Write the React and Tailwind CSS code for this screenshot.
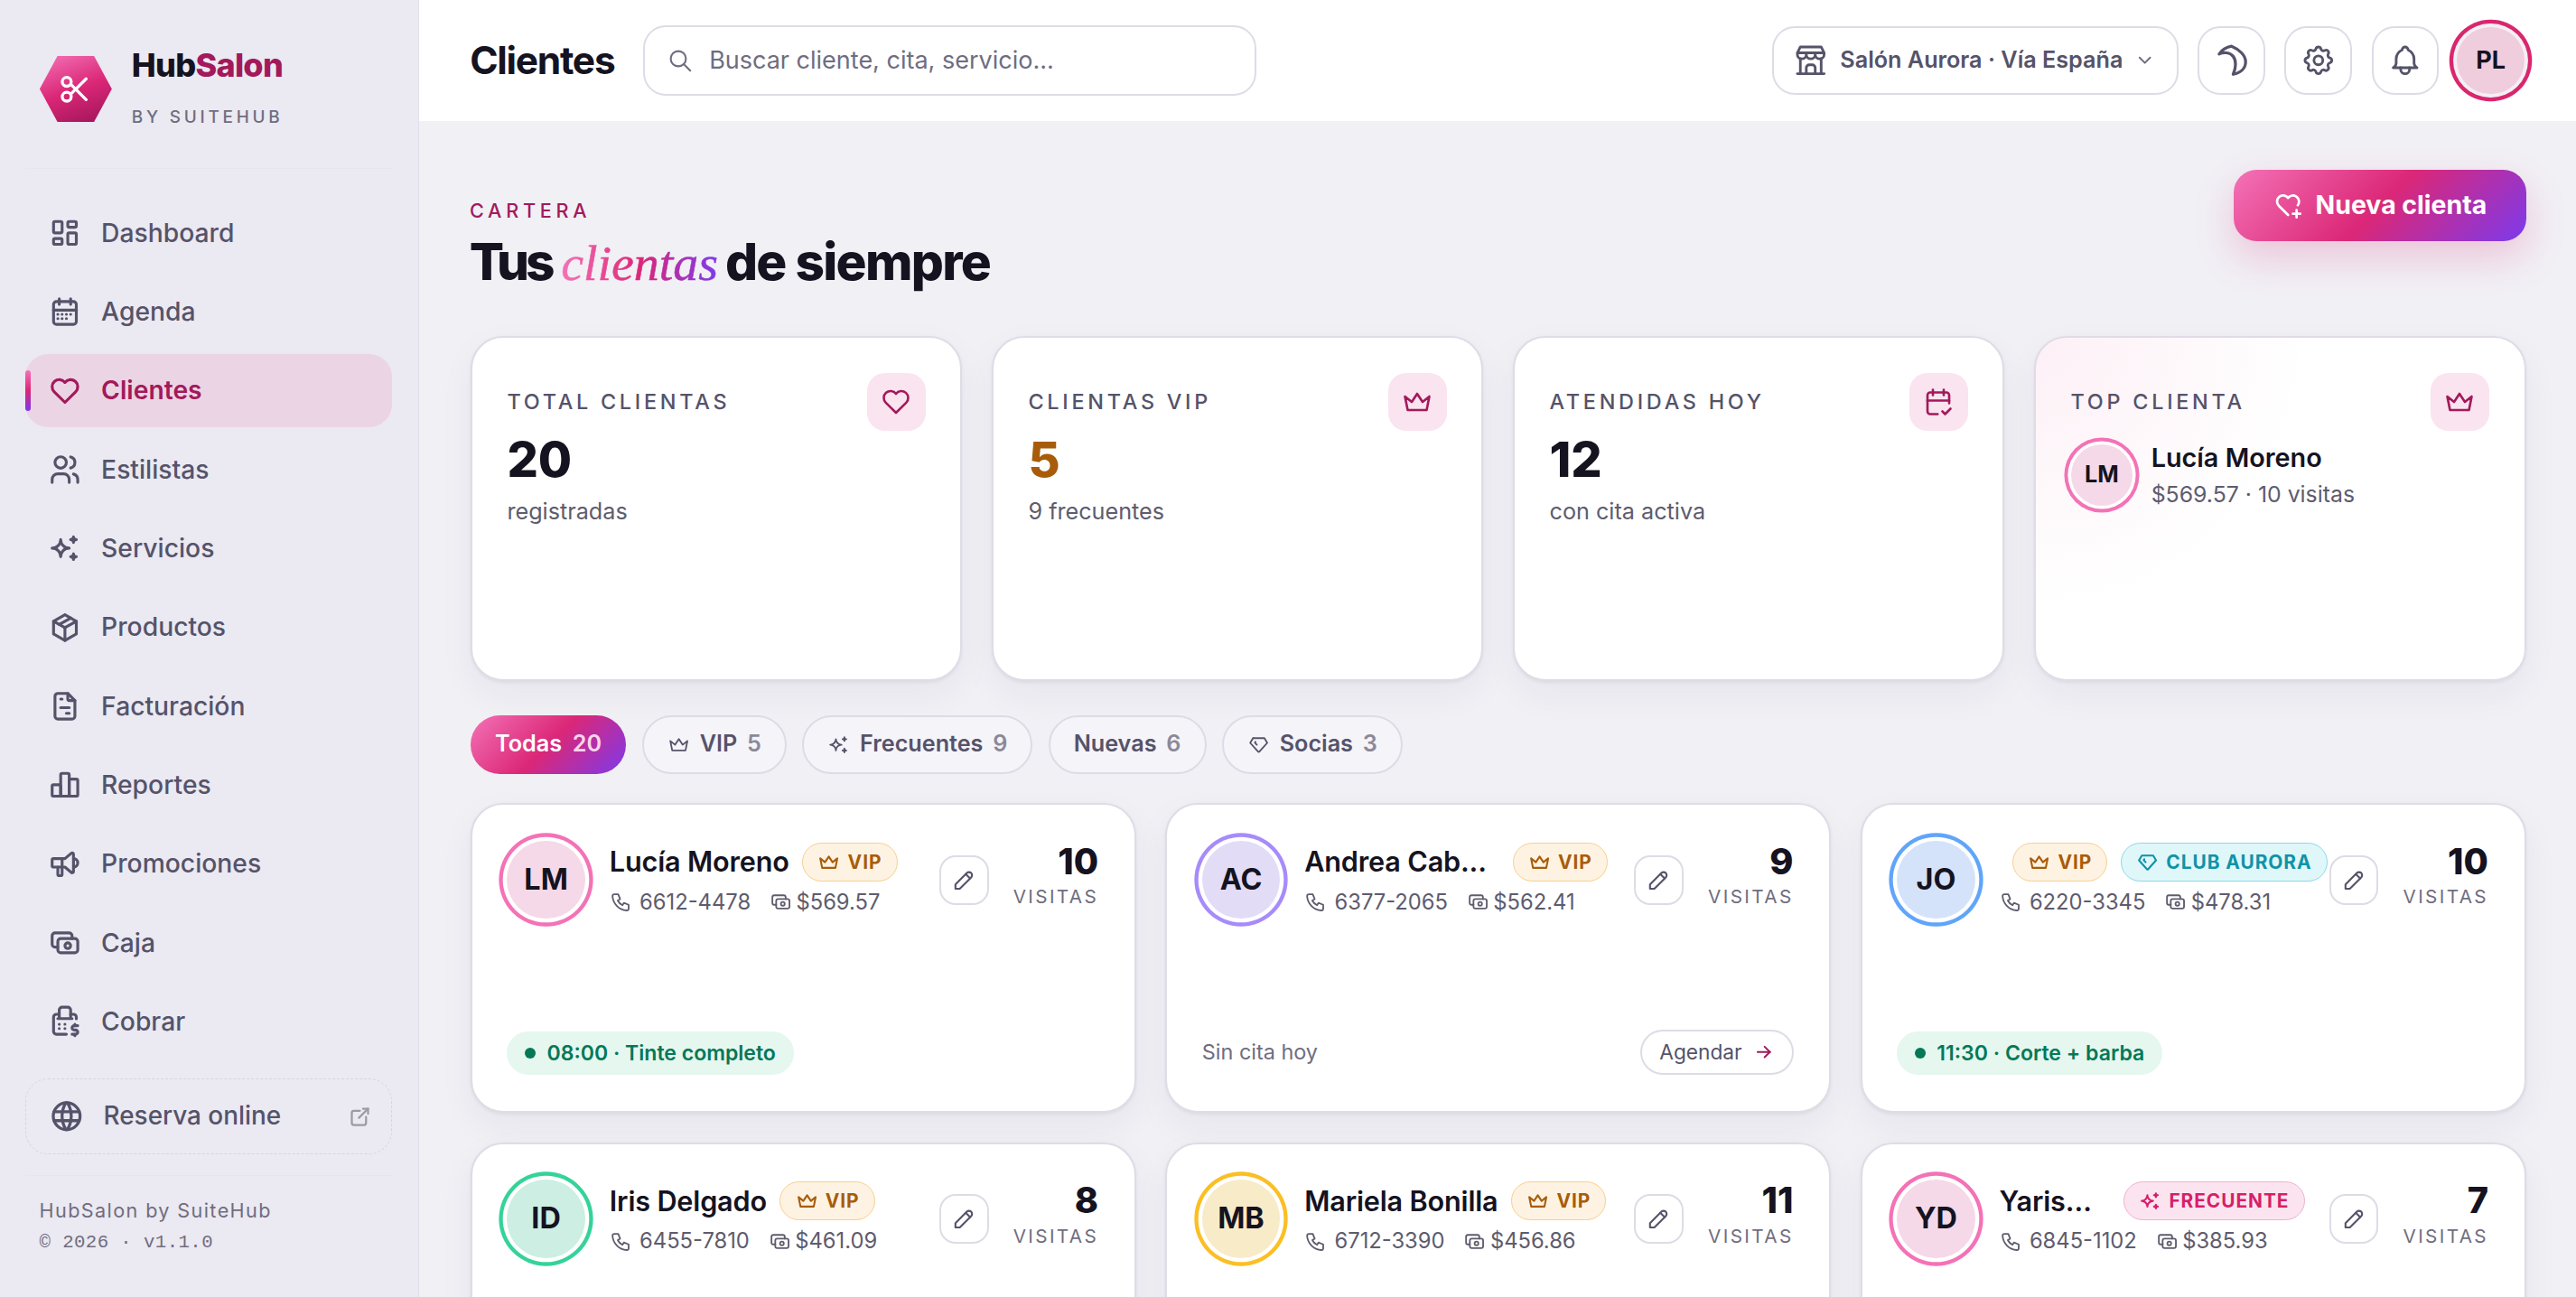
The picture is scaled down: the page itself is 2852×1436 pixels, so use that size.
import React from "react";
import {
  TbLayoutDashboard, TbCalendarMonth, TbHeart, TbUsers, TbSparkles, TbPackage, TbFileInvoice, TbChartBar,
  TbSpeakerphone, TbCash, TbCashRegister, TbWorld, TbExternalLink, TbSearch, TbBuildingStore, TbChevronDown,
  TbSettings, TbBell, TbHeartPlus, TbCrown, TbCalendarCheck, TbPhone, TbPencil, TbArrowRight, TbDiamond, TbScissors,
} from "react-icons/tb";

const NAV = [
  ["Dashboard", TbLayoutDashboard],
  ["Agenda", TbCalendarMonth],
  ["Clientes", TbHeart, true],
  ["Estilistas", TbUsers],
  ["Servicios", TbSparkles],
  ["Productos", TbPackage],
  ["Facturación", TbFileInvoice],
  ["Reportes", TbChartBar],
  ["Promociones", TbSpeakerphone],
  ["Caja", TbCash],
  ["Cobrar", TbCashRegister],
];

const GRAD = "bg-[linear-gradient(135deg,#f472b6_0%,#db2777_50%,#7c3aed_100%)]";
const CARD_SHADOW = "shadow-[0_1px_2px_rgba(40,30,80,0.06),0_8px_22px_rgba(40,30,80,0.05)]";

function Sidebar() {
  return (
    <aside className="w-[257.6px] shrink-0 h-full bg-[#ebe9f1] border-r border-[#e0dfe8] px-[15.7px] flex flex-col">
      <div className="h-[104px] pt-[5px] pl-[8.7px] flex items-center gap-[12.2px] border-b border-[#e6e5ed]">
        <div className="mt-[1px] w-[44.4px] h-[41px] flex items-center justify-center text-white bg-[linear-gradient(160deg,#f472b6_0%,#db2777_50%,#9d1458_100%)] [clip-path:polygon(25%_0,75%_0,100%_50%,75%_100%,25%_100%,0_50%)]">
          <TbScissors size={22} strokeWidth={2} />
        </div>
        <div className="flex flex-col">
          <div className="text-[20px] leading-[20px] font-extrabold tracking-[-0.02em] text-[#15131f]">
            Hub<span className="text-[#a3195b]">Salon</span>
          </div>
          <div className="mt-[16.3px] text-[10.5px] leading-[12px] font-medium tracking-[0.2em] text-[#6f6d80]">BY SUITEHUB</div>
        </div>
      </div>
      <nav className="mt-[16.8px] flex flex-col gap-[3.52px]">
        {NAV.map(([label, Icon, active]) => (
          <div
            key={label}
            className={
              "relative h-[45px] rounded-[14px] px-[14px] flex items-center gap-[11.6px] text-[15.7px] " +
              (active ? "bg-[#ebd5e4] text-[#a3195b] font-semibold" : "text-[#55536a] font-medium")
            }
          >
            {active && (
              <span className="absolute left-0 top-[10px] h-[25px] w-[3.4px] rounded-full bg-[linear-gradient(180deg,#f472b6,#db2777_50%,#7c3aed)]" />
            )}
            <Icon size={21} strokeWidth={2} className="shrink-0" />
            <span>{label}</span>
          </div>
        ))}
      </nav>
      <div className="mt-[12.5px] h-[46.5px] rounded-[14px] border border-dashed border-[#d6d5df] pl-[14px] pr-[12px] flex items-center gap-[11.4px] text-[#55536a] text-[15.5px] font-medium">
        <TbWorld size={22} strokeWidth={2} className="shrink-0" />
        <span className="flex-1">Reserva online</span>
        <TbExternalLink size={15} className="text-[#9b9aa5]" />
      </div>
      <div className="mt-[13px] border-t border-[#e6e5ed] pt-[11px] pl-[8.5px] text-[#6f6d80] text-[12px] leading-[20px]">
        <div className="tracking-[0.065em]">HubSalon by SuiteHub</div>
        <div className="font-['Liberation_Mono',monospace] text-[11.5px] tracking-[0.02em]">© 2026 · v1.1.0</div>
      </div>
    </aside>
  );
}

function IconBtn({ children }) {
  return (
    <button className="w-[41.4px] h-[42px] rounded-[14px] border-[1.5px] border-[#dddce6] bg-white flex items-center justify-center text-[#55536a]">
      {children}
    </button>
  );
}

function Header() {
  return (
    <header className="h-[74.4px] shrink-0 bg-white pl-[31.4px] pr-[31.6px] flex items-center">
      <h1 className="w-[88px] text-[23.6px] font-bold tracking-[-0.03em] text-[#15131f]">Clientes</h1>
      <div className="ml-[18.6px] w-[377px] h-[43px] rounded-[14px] border-[1.5px] border-[#dddce6] flex items-center pl-[14px] gap-[9.5px] text-[#6f6d80] text-[15px]">
        <TbSearch size={16} strokeWidth={1.75} />
        <span>Buscar cliente, cita, servicio...</span>
      </div>
      <div className="ml-auto flex items-center gap-[12px]">
        <div className="w-[249.6px] h-[42px] rounded-[14px] border-[1.5px] border-[#dddce6] flex items-center pl-[11.5px] pr-[13px] gap-[7px] text-[#55536a] text-[14px] font-semibold">
          <TbBuildingStore size={22} strokeWidth={1.75} />
          <span className="flex-1 whitespace-nowrap">Salón Aurora · Vía España</span>
          <TbChevronDown size={13} strokeWidth={2} className="text-[#6f6d80]" />
        </div>
        <IconBtn>
          <svg width="23" height="23" viewBox="0 0 24 24" fill="none" stroke="currentColor" strokeWidth="1.9" strokeLinejoin="round">
            <path d="M4 8 C6 5 9 3.5 12 3 C17 5 21 9 21 13 C21 17 18 20 13 21 C15 17 15 12 13 9.5 C11 7 7 6.5 4 8Z" />
          </svg>
        </IconBtn>
        <IconBtn><TbSettings size={22} strokeWidth={1.75} /></IconBtn>
        <IconBtn><TbBell size={22} strokeWidth={1.75} /></IconBtn>
        <div className="ml-[-0.8px] w-[41.6px] h-[41.6px] rounded-full bg-[#f0cddd] flex items-center justify-center text-[15px] font-bold text-[#15131f] shadow-[0_0_0_2.2px_#f4eff4,0_0_0_4.6px_#d9276f]">
          PL
        </div>
      </div>
    </header>
  );
}

function StatCard({ label, value, valueColor = "text-[#15131f]", sub, Icon }) {
  return (
    <div className={"h-[212.5px] rounded-[20px] border-[1.5px] border-[#dedde6] bg-white p-[21.5px] " + CARD_SHADOW}>
      <div className="flex items-center justify-between">
        <span className="text-[13px] font-medium tracking-[0.16em] text-[#55536a]">{label}</span>
        <span className="w-[36px] h-[36px] rounded-[11px] bg-[#f9e4ef] flex items-center justify-center text-[#a3195b]">
          <Icon size={20} strokeWidth={1.75} />
        </span>
      </div>
      <div className={"text-[30px] leading-[36px] font-extrabold " + valueColor}>{value}</div>
      <div className="mt-[3px] text-[14px] leading-[20px] text-[#5e5c6e]">{sub}</div>
    </div>
  );
}

function TopCard() {
  return (
    <div className={"h-[212.5px] rounded-[20px] border-[1.5px] border-[#e0dbe6] p-[21.5px] bg-[radial-gradient(circle_at_0%_0%,#fdf0f6_0%,#ffffff_45%)] " + CARD_SHADOW}>
      <div className="flex items-center justify-between">
        <span className="text-[13px] font-medium tracking-[0.16em] text-[#55536a]">TOP CLIENTA</span>
        <span className="w-[36px] h-[36px] rounded-[11px] bg-[#f9e4ef] flex items-center justify-center text-[#a3195b]">
          <TbCrown size={20} strokeWidth={1.75} />
        </span>
      </div>
      <div className="mt-[8px] flex items-start gap-[11.5px]">
        <div className="w-[38px] h-[38px] rounded-full bg-[#f5d9e8] flex items-center justify-center text-[14px] font-bold text-[#15131f] shadow-[0_0_0_2px_#ffffff,0_0_0_4.2px_#f472b6]">
          LM
        </div>
        <div className="-mt-[2.5px]">
          <div className="text-[16px] leading-[22px] font-semibold text-[#15131f]">Lucía Moreno</div>
          <div className="mt-[1px] text-[13.8px] leading-[20px] text-[#5e5c6e]">$569.57 · 10 visitas</div>
        </div>
      </div>
    </div>
  );
}

function FilterPill({ label, count, Icon }) {
  return (
    <div className="h-[36px] rounded-full border-[1.5px] border-[#dddce6] bg-[#f5f4f9] px-[14.5px] flex items-center gap-[6px] text-[14px] font-semibold text-[#55536a]">
      {Icon && <Icon size={14} strokeWidth={1.75} />}
      <span>{label}</span>
      <span className="text-[#8b8998]">{count}</span>
    </div>
  );
}

const BADGE = {
  vip: ["VIP", TbCrown, "bg-[#fef3e2] border-[#f6cf8e] text-[#a85c0a]"],
  club: ["CLUB AURORA", TbDiamond, "bg-[#e0f7fa] border-[#8ad8e6] text-[#0e93a8]"],
  freq: ["FRECUENTE", TbSparkles, "bg-[#fbe4ef] border-[#eeb1cf] text-[#d61f69]"],
};

function Badge({ type }) {
  const [label, Icon, cls] = BADGE[type];
  return (
    <span className={"shrink-0 h-[24px] rounded-full border px-[9px] flex items-center gap-[4.5px] text-[11.6px] font-bold tracking-[0.045em] whitespace-nowrap " + cls}>
      <Icon size={14} strokeWidth={2} />
      {label}
    </span>
  );
}

function ClientCard({ c }) {
  return (
    <div className={"h-[190.5px] rounded-[20px] border-[1.5px] border-[#dedde6] bg-white pt-[22px] pl-[21.5px] pr-[22px] pb-[22.5px] flex flex-col justify-between " + CARD_SHADOW}>
      <div className="flex items-center gap-[15px]">
        <div className={"shrink-0 w-[48px] h-[48px] rounded-full flex items-center justify-center text-[18px] font-bold text-[#15131f] " + c.avatar}>
          {c.initials}
        </div>
        <div className="flex-1 min-w-0">
          <div className="flex items-center gap-[8px]">
            <span className={"min-w-0 truncate text-[17px] font-semibold tracking-[-0.005em] text-[#15131f] " + (c.slack ? "pr-[8px]" : "")}>{c.name}</span>
            {c.badges.map((b) => <Badge key={b} type={b} />)}
          </div>
          <div className="mt-[2px] flex items-center text-[13.2px] leading-[20px] text-[#5e5c6e]">
            <TbPhone size={14} strokeWidth={1.75} className="mr-[4.5px]" />
            <span>{c.phone}</span>
            <TbCash size={14} strokeWidth={1.75} className="ml-[11.5px] mr-[2.5px]" />
            <span>{c.total}</span>
          </div>
        </div>
        <button className="shrink-0 w-[30.5px] h-[30.5px] rounded-[10px] border-[1.5px] border-[#dddce6] bg-white flex items-center justify-center text-[#55536a]">
          <TbPencil size={16} strokeWidth={1.75} />
        </button>
        <div className="shrink-0 self-start text-right">
          <div className="text-[22px] leading-[26px] font-extrabold text-[#15131f]">{c.visits}</div>
          <div className="mt-[1.4px] text-[11.5px] leading-[14px] tracking-[0.115em] text-[#6f6d80]">VISITAS</div>
        </div>
      </div>
      {c.appt ? (
        <span className="self-start h-[26.5px] rounded-full bg-[#e5f7ef] px-[11px] flex items-center gap-[7px] text-[12.8px] font-semibold text-[#047857]">
          <span className="w-[6.5px] h-[6.5px] rounded-full bg-[#047857]" />
          {c.appt}
        </span>
      ) : (
        <div className="flex items-center justify-between">
          <span className="text-[13px] text-[#6f6d80]">Sin cita hoy</span>
          <span className="h-[27.5px] w-[94px] rounded-full border-[1.5px] border-[#dddce6] flex items-center justify-center gap-[7px] text-[12.6px] text-[#55536a]">
            Agendar
            <TbArrowRight size={13} className="text-[#a3195b]" />
          </span>
        </div>
      )}
    </div>
  );
}

const PINK = "bg-[#f5d9e8] shadow-[0_0_0_2.4px_#ffffff,0_0_0_4.8px_#f472b6]";
const CLIENTS = [
  { name: "Lucía Moreno", initials: "LM", avatar: PINK, badges: ["vip"], phone: "6612-4478", total: "$569.57", visits: 10, appt: "08:00 · Tinte completo" },
  { name: "Andrea Cab...", slack: true, initials: "AC", avatar: "bg-[#e3dcf7] shadow-[0_0_0_2.4px_#ffffff,0_0_0_4.8px_#a78bfa]", badges: ["vip"], phone: "6377-2065", total: "$562.41", visits: 9 },
  { name: "Jorge Ortiz", initials: "JO", avatar: "bg-[#d4e3fa] shadow-[0_0_0_2.4px_#ffffff,0_0_0_4.8px_#60a5fa]", badges: ["vip", "club"], phone: "6220-3345", total: "$478.31", visits: 10, appt: "11:30 · Corte + barba" },
  { name: "Iris Delgado", initials: "ID", avatar: "bg-[#cdeee2] shadow-[0_0_0_2.4px_#ffffff,0_0_0_4.8px_#34d399]", badges: ["vip"], phone: "6455-7810", total: "$461.09", visits: 8 },
  { name: "Mariela Bonilla", initials: "MB", avatar: "bg-[#f8ebc8] shadow-[0_0_0_2.4px_#ffffff,0_0_0_4.8px_#fbbf24]", badges: ["vip"], phone: "6712-3390", total: "$456.86", visits: 11 },
  { name: "Yarisma Domínguez", initials: "YD", avatar: PINK, badges: ["freq"], phone: "6845-1102", total: "$385.93", visits: 7 },
];

function Content() {
  return (
    <main className="flex-1 min-h-0 overflow-hidden bg-[#f1f0f5] pl-[31.7px] pr-[30.8px] pt-[29.8px]">
      <div className="h-[102.4px] flex items-start justify-between">
        <div className="mt-[17.5px]">
          <div className="-ml-[0.4px] text-[12px] leading-[16px] font-medium tracking-[0.22em] text-[#a3195b]">CARTERA</div>
          <div className="-ml-[0.5px] mt-[5.5px] text-[31.5px] leading-[36px] font-extrabold tracking-[-0.03em] text-[#15131f] whitespace-nowrap">
            <span className="tracking-[-0.07em]">Tus</span>{" "}
            <span className="font-['Liberation_Serif',serif] italic font-normal text-[31px] tracking-[0] [-webkit-text-stroke:0.3px_transparent] bg-clip-text text-transparent bg-[linear-gradient(90deg,#f472b6,#db2777_50%,#7c3aed)]">clientas</span>{" "}
            <span className="-ml-[1.5px]">de siempre</span>
          </div>
        </div>
        <button className={"w-[179.5px] h-[44.4px] rounded-[14px] flex items-center justify-center gap-[8px] text-white text-[15.8px] font-bold shadow-[0_10px_24px_rgba(219,39,119,0.22)] " + GRAD}>
          <TbHeartPlus size={18} strokeWidth={2} />
          Nueva clienta
        </button>
      </div>
      <div className="grid grid-cols-4 gap-[18px]">
        <StatCard label="TOTAL CLIENTAS" value="20" sub="registradas" Icon={TbHeart} />
        <StatCard label="CLIENTAS VIP" value="5" valueColor="text-[#a85c0a]" sub="9 frecuentes" Icon={TbCrown} />
        <StatCard label="ATENDIDAS HOY" value="12" sub="con cita activa" Icon={TbCalendarCheck} />
        <TopCard />
      </div>
      <div className="mt-[20.8px] flex items-center gap-[9.5px]">
        <div className={"h-[36px] rounded-full px-[15.2px] flex items-center gap-[6.5px] text-[14px] font-semibold text-white " + GRAD}>
          <span>Todas</span>
          <span className="text-[#fbd5e8]">20</span>
        </div>
        <FilterPill label="VIP" count={5} Icon={TbCrown} />
        <FilterPill label="Frecuentes" count={9} Icon={TbSparkles} />
        <FilterPill label="Nuevas" count={6} />
        <FilterPill label="Socias" count={3} Icon={TbDiamond} />
      </div>
      <div className="mt-[18.2px] grid grid-cols-3 gap-x-[18px] gap-y-[18px]">
        {CLIENTS.map((c) => <ClientCard key={c.initials} c={c} />)}
      </div>
    </main>
  );
}

export default function App() {
  return (
    <div className="[zoom:1.8] w-[1584.44px] h-[797.78px] overflow-hidden flex font-[Inter,sans-serif] text-[#15131f]">
      <Sidebar />
      <div className="flex-1 min-w-0 flex flex-col">
        <Header />
        <Content />
      </div>
    </div>
  );
}
